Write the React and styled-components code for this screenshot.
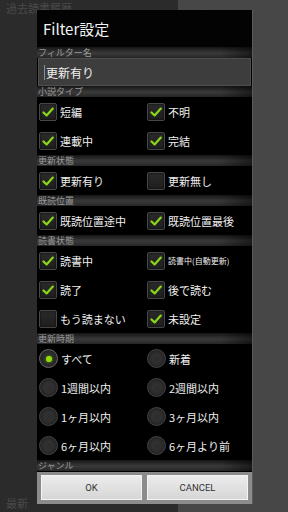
import React from "react";
import styled, { createGlobalStyle } from "styled-components";

const GlobalStyle = createGlobalStyle`
  html, body {
    margin: 0;
    padding: 0;
    background: #2b2b2b;
  }
  body {
    font-family: "Noto Sans CJK JP", "Noto Sans", "Liberation Sans", sans-serif;
  }
`;

const Screen = styled.div`
  position: relative;
  width: 288px;
  height: 512px;
  overflow: hidden;
  display: flex;
`;

const BackPane = styled.div`
  flex: ${props => (props.wide ? "0 0 178px" : "1")};
  background: ${props => props.bg};
  display: flex;
  flex-direction: column;
  justify-content: space-between;
  padding: 1px 6px 2px;
  box-sizing: border-box;
`;

const BackText = styled.div`
  font-size: 11px;
  color: #4a4a4a;
  line-height: 14px;
  white-space: nowrap;
`;

const Dialog = styled.div`
  position: absolute;
  top: 10px;
  left: 37px;
  width: 215px;
  height: 494px;
  background: #000;
  display: flex;
  flex-direction: column;
  box-shadow: 1px 0 0 #5a5a5a;
`;

const Title = styled.div`
  flex: 0 0 37px;
  display: flex;
  align-items: center;
  padding-left: 6px;
  color: #f2f2f2;
  font-size: 15px;
  background: #030303;
`;

const Body = styled.div`
  flex: 1;
  overflow: hidden;
  display: flex;
  flex-direction: column;
`;

const SectionHeader = styled.div`
  flex: 0 0 11px;
  height: 11px;
  display: flex;
  align-items: center;
  padding-left: 1px;
  font-size: 9px;
  line-height: 11px;
  color: #9a9a9a;
  background:
    linear-gradient(to right, rgba(0,0,0,0) 0%, rgba(0,0,0,0) 85%, rgba(0,0,0,0.5) 100%),
    linear-gradient(to bottom, #151515 0%, #3a3a3a 55%, #262626 100%);
`;

const NameField = styled.div`
  flex: 0 0 28px;
  margin: 0 1px;
  display: flex;
  align-items: center;
  padding-left: 5px;
  background: #3d3d3d;
  border: 1px solid #4e4e4e;
  box-sizing: border-box;
  color: #f0f0f0;
  font-size: 12px;
`;

const Caret = styled.span`
  width: 1px;
  height: 15px;
  background: #8a8a8a;
  margin-right: 1px;
`;

const Row = styled.div`
  flex: 0 0 29px;
  display: grid;
  grid-template-columns: 108px 1fr;
  padding-left: 2px;
  align-items: center;
`;

const Option = styled.div`
  display: flex;
  align-items: center;
  gap: 3px;
  color: #efefef;
  font-size: ${props => (props.small ? "8px" : "11px")};
  white-space: nowrap;
`;

const Box = styled.div`
  width: 16px;
  height: 16px;
  border-radius: 2px;
  background: linear-gradient(#2a2a2a, #1e1e1e);
  border: 1px solid #474747;
  box-shadow: inset 0 0 2px #000;
  display: flex;
  align-items: center;
  justify-content: center;
`;

const Radio = styled.div`
  width: 17px;
  height: 17px;
  border-radius: 50%;
  background: radial-gradient(circle at 50% 50%, #3a3a3a 0%, #2a2a2a 55%, #161616 100%);
  border: 1px solid ${props => (props.on ? "#6a6a6a" : "#444")};
  display: flex;
  align-items: center;
  justify-content: center;
`;

const Dot = styled.div`
  width: 6px;
  height: 6px;
  border-radius: 50%;
  background: ${props => (props.on ? "#8fe000" : "#2e2e2e")};
  box-shadow: ${props => (props.on ? "0 0 2px #6fb000" : "none")};
`;

const ButtonBar = styled.div`
  flex: 0 0 32px;
  display: grid;
  grid-template-columns: 1fr 1fr;
  gap: 5px;
  padding: 3px 4px 4px;
  background: #8c8c8c;
  box-sizing: border-box;
`;

const Button = styled.div`
  display: flex;
  align-items: center;
  justify-content: center;
  background: linear-gradient(#ececec, #d6d6d6);
  border: 1px solid #f4f4f4;
  font-family: "Roboto", "Liberation Sans", sans-serif;
  font-size: 9.5px;
  color: #333;
`;

const Check = () => (
  <svg width="12" height="10" viewBox="0 0 12 10">
    <polyline
      points="1.5,5.5 4.6,8.4 10.8,1.6"
      fill="none"
      stroke="#8cd61a"
      strokeWidth="2.2"
      strokeLinecap="round"
      strokeLinejoin="round"
    />
  </svg>
);

const CheckItem = ({ label, checked, small }) => (
  <Option small={small}>
    <Box>{checked && <Check />}</Box>
    {label}
  </Option>
);

const RadioItem = ({ label, on }) => (
  <Option>
    <Radio on={on}>
      <Dot on={on} />
    </Radio>
    {label}
  </Option>
);

const CheckRow = ({ left, right }) => (
  <Row>
    <CheckItem {...left} />
    <CheckItem {...right} />
  </Row>
);

const RadioRow = ({ left, right }) => (
  <Row>
    <RadioItem {...left} />
    <RadioItem {...right} />
  </Row>
);

const App = () => (
  <Screen>
    <GlobalStyle />
    <BackPane wide bg="#2b2b2b">
      <BackText>過去読書履歴</BackText>
      <BackText>最新</BackText>
    </BackPane>
    <BackPane bg="#474747">
      <BackText>Filter</BackText>
    </BackPane>

    <Dialog>
      <Title>Filter設定</Title>
      <Body>
        <SectionHeader>フィルター名</SectionHeader>
        <NameField>
          <Caret />
          更新有り
        </NameField>

        <SectionHeader>小説タイプ</SectionHeader>
        <CheckRow left={{ label: "短編", checked: true }} right={{ label: "不明", checked: true }} />
        <CheckRow left={{ label: "連載中", checked: true }} right={{ label: "完結", checked: true }} />

        <SectionHeader>更新状態</SectionHeader>
        <CheckRow left={{ label: "更新有り", checked: true }} right={{ label: "更新無し", checked: false }} />

        <SectionHeader>既読位置</SectionHeader>
        <CheckRow
          left={{ label: "既読位置途中", checked: true }}
          right={{ label: "既読位置最後", checked: true }}
        />

        <SectionHeader>読書状態</SectionHeader>
        <CheckRow
          left={{ label: "読書中", checked: true }}
          right={{ label: "読書中(自動更新)", checked: true, small: true }}
        />
        <CheckRow left={{ label: "読了", checked: true }} right={{ label: "後で読む", checked: true }} />
        <CheckRow left={{ label: "もう読まない", checked: false }} right={{ label: "未設定", checked: true }} />

        <SectionHeader>更新時期</SectionHeader>
        <RadioRow left={{ label: "すべて", on: true }} right={{ label: "新着" }} />
        <RadioRow left={{ label: "1週間以内" }} right={{ label: "2週間以内" }} />
        <RadioRow left={{ label: "1ヶ月以内" }} right={{ label: "3ヶ月以内" }} />
        <RadioRow left={{ label: "6ヶ月以内" }} right={{ label: "6ヶ月より前" }} />

        <SectionHeader>ジャンル</SectionHeader>
      </Body>
      <ButtonBar>
        <Button>OK</Button>
        <Button>CANCEL</Button>
      </ButtonBar>
    </Dialog>
  </Screen>
);

export default App;
